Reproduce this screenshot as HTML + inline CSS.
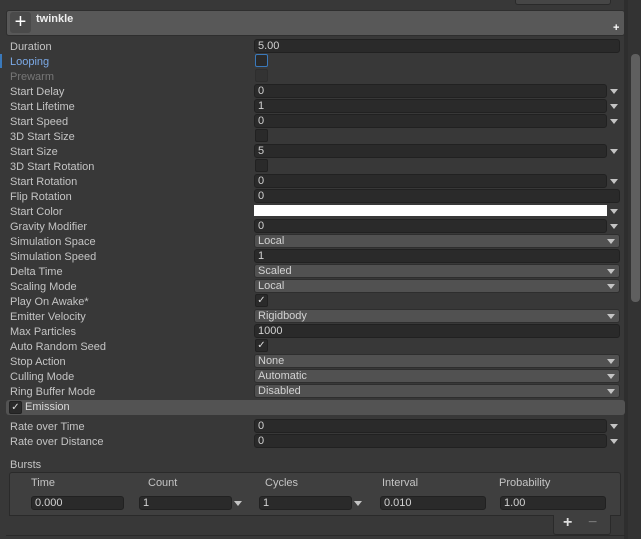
<!DOCTYPE html><html><head><style>
body{margin:0;width:641px;height:539px;background:#383838;font-family:"Liberation Sans",sans-serif;font-size:11px;color:#c4c4c4;position:relative;overflow:hidden}
div{position:absolute;box-sizing:border-box}
.l{left:10px;height:15px;line-height:17px}
.f{left:254px;height:14px;background:#2a2a2a;border:1px solid #212121;border-radius:3px;line-height:13px;padding-left:3px;color:#d2d2d2}
.d{left:254px;width:366px;height:14px;background:#515151;border:1px solid #2e2e2e;border-radius:3px;line-height:13px;padding-left:3px;color:#d2d2d2}
.d:after{content:"";position:absolute;right:4px;top:4px;border-left:4px solid transparent;border-right:4px solid transparent;border-top:5px solid #c4c4c4}
.a{left:610px;width:0;height:0;border-left:4px solid transparent;border-right:4px solid transparent;border-top:5px solid #c4c4c4}
.c{left:255px;width:13px;height:13px;background:#2a2a2a;border:1px solid #212121;border-radius:2px;color:#ddd;font-size:10px;line-height:12px;text-align:center}
</style></head><body>
<div style="left:515px;top:0;width:96px;height:5px;background:#464646;border:1px solid #2a2a2a;border-top:none;border-radius:0 0 3px 3px"></div>
<div style="left:6px;top:10px;width:619px;height:26px;background:#585858;border:1px solid #2e2e2e;border-radius:3px"></div>
<div style="left:10px;top:12px;width:21px;height:21px;background:#4a4a4a;border-radius:3px;color:#fff;font-size:20px;line-height:20px;text-align:center">+</div>
<div style="left:36px;top:13px;color:#eee;font-weight:bold;font-size:11px">twinkle</div>
<div style="left:613px;top:22px;color:#fff;font-weight:bold;font-size:11px">+</div>
<div style="left:624px;top:0;width:17px;height:539px;background:#2e2e2e"></div>
<div style="left:628px;top:0;width:13px;height:539px;background:#333"></div>
<div style="left:631px;top:54px;width:9px;height:248px;background:#5f5f5f;border-radius:4px"></div>
<div style="left:0;top:54px;width:2px;height:14px;background:#3a79bb"></div>

<div class="l" style="top:39px">Duration</div><div class="f" style="top:39px;width:366px">5.00</div>
<div class="l" style="top:54px;color:#7ba9e6">Looping</div><div class="c" style="top:54px;border-color:#3a79bb"></div>
<div class="l" style="top:69px;color:#777">Prewarm</div><div class="c" style="top:69px;background:#333;border-color:#2e2e2e"></div>
<div class="l" style="top:84px">Start Delay</div><div class="f" style="top:84px;width:353px">0</div><div class="a" style="top:89px"></div>
<div class="l" style="top:99px">Start Lifetime</div><div class="f" style="top:99px;width:353px">1</div><div class="a" style="top:104px"></div>
<div class="l" style="top:114px">Start Speed</div><div class="f" style="top:114px;width:353px">0</div><div class="a" style="top:119px"></div>
<div class="l" style="top:129px">3D Start Size</div><div class="c" style="top:129px"></div>
<div class="l" style="top:144px">Start Size</div><div class="f" style="top:144px;width:353px">5</div><div class="a" style="top:149px"></div>
<div class="l" style="top:159px">3D Start Rotation</div><div class="c" style="top:159px"></div>
<div class="l" style="top:174px">Start Rotation</div><div class="f" style="top:174px;width:353px">0</div><div class="a" style="top:179px"></div>
<div class="l" style="top:189px">Flip Rotation</div><div class="f" style="top:189px;width:366px">0</div>
<div class="l" style="top:204px">Start Color</div><div style="left:254px;top:205px;width:353px;height:11px;background:#fff"></div><div class="a" style="top:209px"></div>
<div class="l" style="top:219px">Gravity Modifier</div><div class="f" style="top:219px;width:353px">0</div><div class="a" style="top:224px"></div>
<div class="l" style="top:234px">Simulation Space</div><div class="d" style="top:234px">Local</div>
<div class="l" style="top:249px">Simulation Speed</div><div class="f" style="top:249px;width:366px">1</div>
<div class="l" style="top:264px">Delta Time</div><div class="d" style="top:264px">Scaled</div>
<div class="l" style="top:279px">Scaling Mode</div><div class="d" style="top:279px">Local</div>
<div class="l" style="top:294px">Play On Awake*</div><div class="c" style="top:294px">✓</div>
<div class="l" style="top:309px">Emitter Velocity</div><div class="d" style="top:309px">Rigidbody</div>
<div class="l" style="top:324px">Max Particles</div><div class="f" style="top:324px;width:366px">1000</div>
<div class="l" style="top:339px">Auto Random Seed</div><div class="c" style="top:339px">✓</div>
<div class="l" style="top:354px">Stop Action</div><div class="d" style="top:354px">None</div>
<div class="l" style="top:369px">Culling Mode</div><div class="d" style="top:369px">Automatic</div>
<div class="l" style="top:384px">Ring Buffer Mode</div><div class="d" style="top:384px">Disabled</div>

<div style="left:6px;top:400px;width:619px;height:15px;background:#535353;border-radius:3px"></div>
<div class="c" style="left:9px;top:401px">✓</div>
<div class="l" style="left:25px;top:399px;color:#d8d8d8">Emission</div>
<div class="l" style="top:419px">Rate over Time</div><div class="f" style="top:419px;width:353px">0</div><div class="a" style="top:424px"></div>
<div class="l" style="top:434px">Rate over Distance</div><div class="f" style="top:434px;width:353px">0</div><div class="a" style="top:439px"></div>
<div class="l" style="top:457px">Bursts</div>
<div style="left:9px;top:472px;width:612px;height:21px;background:#3f3f3f;border:1px solid #2a2a2a;border-radius:3px 3px 0 0"></div>
<div style="left:31px;top:477px">Time</div><div style="left:148px;top:477px">Count</div><div style="left:265px;top:477px">Cycles</div><div style="left:382px;top:477px">Interval</div><div style="left:499px;top:477px">Probability</div>
<div style="left:9px;top:492px;width:612px;height:24px;background:#3f3f3f;border:1px solid #2a2a2a;border-top:none"></div>
<div class="f" style="left:31px;top:496px;width:93px">0.000</div>
<div class="f" style="left:139px;top:496px;width:93px">1</div><div class="a" style="left:234px;top:501px"></div>
<div class="f" style="left:259px;top:496px;width:93px">1</div><div class="a" style="left:354px;top:501px"></div>
<div class="f" style="left:380px;top:496px;width:106px">0.010</div>
<div class="f" style="left:500px;top:496px;width:106px">1.00</div>
<div style="left:553px;top:515px;width:58px;height:20px;background:#3f3f3f;border:1px solid #2a2a2a;border-top:none;border-radius:0 0 3px 3px"></div>
<div style="left:563px;top:514px;color:#ddd;font-size:16px;font-weight:bold">+</div>
<div style="left:588px;top:514px;color:#777;font-size:16px">−</div>
<div style="left:6px;top:535px;width:619px;height:1px;background:#2a2a2a"></div>
</body></html>
